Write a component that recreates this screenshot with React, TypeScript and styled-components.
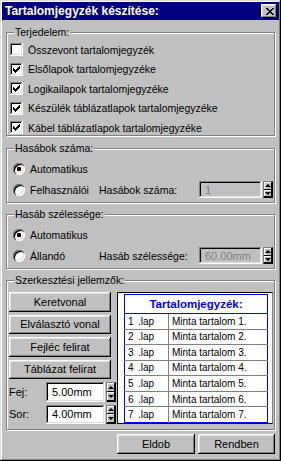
import React from 'react';
import styled, { createGlobalStyle } from 'styled-components';

const GlobalStyle = createGlobalStyle`
  html, body { margin: 0; padding: 0; background: #c0c0c0; }
  body {
    font-family: 'Liberation Sans', Arial, sans-serif;
    font-size: 10.5px;
    color: #000;
  }
  * { box-sizing: border-box; }
`;

const raised = `
  background: #c0c0c0;
  box-shadow: inset -1px -1px 0 #000, inset 1px 1px 0 #fff,
    inset -2px -2px 0 #808080, inset 2px 2px 0 #dfdfdf;
`;

const sunken = `
  box-shadow: inset -1px -1px 0 #fff, inset 1px 1px 0 #808080,
    inset -2px -2px 0 #dfdfdf, inset 2px 2px 0 #000;
`;

const Window = styled.div`
  width: 281px;
  height: 461px;
  padding: 2px;
  background: #c0c0c0;
  box-shadow: inset -1px -1px 0 #000, inset 1px 1px 0 #dfdfdf,
    inset -2px -2px 0 #808080, inset 2px 2px 0 #fff;
  display: flex;
  flex-direction: column;
`;

const TitleBar = styled.div`
  height: 18px;
  flex: none;
  background: #000080;
  color: #fff;
  display: flex;
  align-items: center;
  justify-content: space-between;
  padding: 0 2px 0 3px;
  font-size: 12px;
  font-weight: bold;
`;

const CloseButton = styled.div`
  ${raised}
  width: 16px;
  height: 14px;
  display: flex;
  align-items: center;
  justify-content: center;
  padding-left: 1px;
`;

const Body = styled.div`
  flex: none;
  display: flex;
  flex-direction: column;
  padding: 6px 4px 0 4px;
  & > * { flex: none; }
`;

const Group = styled.fieldset<{ $pt: number; $pb: number; $mt?: number }>`
  margin: ${(p) => p.$mt ?? 0}px 0 0 0;
  min-width: 0;
  width: 269px;
  padding: ${(p) => p.$pt}px 1px ${(p) => p.$pb}px 2px;
  border: 1px solid #808080;
  box-shadow: inset 1px 1px 0 #fff, 1px 1px 0 #fff;
`;

const Legend = styled.legend`
  margin-left: 5px;
  padding: 0 1px;
  line-height: 13px;
  height: 13px;
  background: #c0c0c0;
`;

const CheckList = styled.div`
  display: flex;
  flex-direction: column;
  gap: 6.5px;
  padding-left: 1px;
`;

const CheckRow = styled.label`
  display: flex;
  align-items: center;
  height: 13px;
  gap: 5px;
`;

const CheckBox = styled.span`
  ${sunken}
  width: 13px;
  height: 13px;
  flex: none;
  background: #fff;
  display: flex;
  align-items: center;
  justify-content: center;
`;

const OptionList = styled.div`
  display: flex;
  flex-direction: column;
  gap: 6px;
  padding-left: 4px;
`;

const OptionRow = styled.div`
  display: grid;
  grid-template-columns: 86px 100px 63px 10px;
  align-items: center;
  height: 17px;
  & > :nth-child(4) { margin-left: 1px; }
`;

const RadioRow = styled.label`
  display: flex;
  align-items: center;
  height: 13px;
  gap: 5px;
`;

const Radio = styled.span<{ $on?: boolean }>`
  width: 12px;
  height: 12px;
  flex: none;
  border-radius: 50%;
  background: #fff;
  box-shadow: inset 1px 1px 0 #808080, inset 2px 2px 0 #000,
    inset -1px -1px 0 #fff, inset -2px -2px 0 #dfdfdf;
  display: flex;
  align-items: center;
  justify-content: center;
  &::after {
    content: '';
    width: 4px;
    height: 4px;
    border-radius: 1px;
    background: ${(p) => (p.$on ? '#000' : 'transparent')};
  }
`;

const Field = styled.div<{ $disabled?: boolean }>`
  ${sunken}
  height: 100%;
  background: ${(p) => (p.$disabled ? '#c0c0c0' : '#fff')};
  color: ${(p) => (p.$disabled ? '#808080' : '#000')};
  font-size: 11px;
  display: flex;
  align-items: center;
  padding: 0 6px;
`;

const Spinner = styled.div`
  width: 10px;
  height: 100%;
  display: flex;
  flex-direction: column;
  border: 1px solid #000;
  border-top-color: #808080;
  border-left-color: #808080;
`;

const SpinButton = styled.div<{ $down?: boolean }>`
  flex: 1;
  background: #c0c0c0;
  box-shadow: inset -1px -1px 0 #000, inset 1px 1px 0 #fff;
  display: flex;
  align-items: center;
  justify-content: center;
  &::after {
    content: '';
    width: 0;
    height: 0;
    border-left: 3px solid transparent;
    border-right: 3px solid transparent;
    ${(p) => (p.$down ? 'border-top: 3px solid #000;' : 'border-bottom: 3px solid #000;')}
  }
`;

const EditArea = styled.div`
  display: flex;
  align-items: flex-start;
  gap: 2px;
`;

const SideColumn = styled.div`
  width: 106px;
  flex: none;
  display: flex;
  flex-direction: column;
  gap: 3px;
  & > * { flex: none; }
`;

const Button = styled.div<{ $w?: number }>`
  ${raised}
  flex: none;
  width: ${(p) => p.$w ?? 102}px;
  height: 19.5px;
  display: flex;
  align-items: center;
  justify-content: center;
  font-size: 11px;
`;

const SizeRow = styled.div`
  display: grid;
  grid-template-columns: 36px 59px 10px;
  column-gap: 1px;
  align-items: center;
  height: 19.5px;
  font-size: 11px;
`;

const Preview = styled.div`
  width: 156px;
  height: 132px;
  flex: none;
  background: #fff;
  border-top: 1px solid #000;
  border-left: 1px solid #000;
  border-right: 1px solid #808080;
  border-bottom: 1px solid #000;
  overflow: hidden;
  padding: 1px 0 0 6px;
`;

const Table = styled.table`
  width: 144px;
  border-collapse: collapse;
  border: 1px solid #0000ff;
  font-size: 10px;
  td {
    height: 15.57px;
    padding: 0;
    border-top: 1px solid #808080;
    white-space: nowrap;
  }
  td:first-child {
    width: 44px;
    padding-left: 3px;
    border-right: 1px solid #808080;
  }
  td:last-child { padding-left: 3px; }
`;

const TableHead = styled.th`
  height: 19px;
  padding: 0;
  color: #0000ff;
  font-size: 11.5px;
  font-weight: bold;
  text-align: center;
  border-bottom: 1px solid #0000ff;
`;

const Num = styled.span`
  display: inline-block;
  width: 10px;
`;

const Footer = styled.div`
  display: flex;
  justify-content: flex-end;
  gap: 3px;
  margin-top: 4px;
`;

const CheckMark = () => (
  <svg width="7" height="7" viewBox="0 0 7 7" shapeRendering="crispEdges">
    <path d="M0 2h1v3h-1z M1 3h1v3h-1z M2 4h1v3h-1z M3 3h1v3h-1z M4 2h1v3h-1z M5 1h1v3h-1z M6 0h1v3h-1z" fill="#000" />
  </svg>
);

const CloseGlyph = () => (
  <svg width="8" height="7" viewBox="0 0 8 7" shapeRendering="crispEdges">
    <path
      d="M0 0h2v1h-2z M6 0h2v1h-2z M1 1h2v1h-2z M5 1h2v1h-2z M2 2h4v1h-4z M3 3h2v1h-2z M2 4h4v1h-4z M1 5h2v1h-2z M5 5h2v1h-2z M0 6h2v1h-2z M6 6h2v1h-2z"
      fill="#000"
    />
  </svg>
);

const scope = [
  { label: 'Összevont tartalomjegyzék', on: false },
  { label: 'Elsőlapok tartalomjegyzéke', on: true },
  { label: 'Logikailapok tartalomjegyzéke', on: true },
  { label: 'Készülék táblázatlapok tartalomjegyzéke', on: true },
  { label: 'Kábel táblázatlapok tartalomjegyzéke', on: true },
];

const Spin = () => (
  <Spinner>
    <SpinButton />
    <SpinButton $down />
  </Spinner>
);

const App = () => (
  <>
    <GlobalStyle />
    <Window>
      <TitleBar>
        <span>Tartalomjegyzék készítése:</span>
        <CloseButton>
          <CloseGlyph />
        </CloseButton>
      </TitleBar>
      <Body>
        <Group $pt={4} $pb={1}>
          <Legend>Terjedelem:</Legend>
          <CheckList>
            {scope.map((s) => (
              <CheckRow key={s.label}>
                <CheckBox>{s.on && <CheckMark />}</CheckBox>
                {s.label}
              </CheckRow>
            ))}
          </CheckList>
        </Group>

        <Group $pt={7} $pb={4} $mt={6}>
          <Legend>Hasábok száma:</Legend>
          <OptionList>
            <RadioRow>
              <Radio $on />
              Automatikus
            </RadioRow>
            <OptionRow>
              <RadioRow>
                <Radio />
                Felhasználói
              </RadioRow>
              <span>Hasábok száma:</span>
              <Field $disabled>1</Field>
              <Spin />
            </OptionRow>
          </OptionList>
        </Group>

        <Group $pt={7} $pb={4} $mt={5}>
          <Legend>Hasáb szélessége:</Legend>
          <OptionList>
            <RadioRow>
              <Radio $on />
              Automatikus
            </RadioRow>
            <OptionRow>
              <RadioRow>
                <Radio />
                Állandó
              </RadioRow>
              <span>Hasáb szélessége:</span>
              <Field $disabled>60.00mm</Field>
              <Spin />
            </OptionRow>
          </OptionList>
        </Group>

        <Group $pt={5} $pb={5} $mt={5}>
          <Legend>Szerkesztési jellemzők:</Legend>
          <EditArea>
            <SideColumn>
              <Button>Keretvonal</Button>
              <Button>Elválasztó vonal</Button>
              <Button>Fejléc felirat</Button>
              <Button>Táblázat felirat</Button>
              <SizeRow>
                <span>Fej:</span>
                <Field>5.00mm</Field>
                <Spin />
              </SizeRow>
              <SizeRow>
                <span>Sor:</span>
                <Field>4.00mm</Field>
                <Spin />
              </SizeRow>
            </SideColumn>
            <Preview>
              <Table>
                <thead>
                  <tr>
                    <TableHead colSpan={2}>Tartalomjegyzék:</TableHead>
                  </tr>
                </thead>
                <tbody>
                  {[1, 2, 3, 4, 5, 6, 7].map((n) => (
                    <tr key={n}>
                      <td>
                        <Num>{n}</Num>.lap
                      </td>
                      <td>Minta tartalom {n}.</td>
                    </tr>
                  ))}
                </tbody>
              </Table>
            </Preview>
          </EditArea>
        </Group>

        <Footer>
          <Button $w={78}>Eldob</Button>
          <Button $w={77}>Rendben</Button>
        </Footer>
      </Body>
    </Window>
  </>
);

export default App;
